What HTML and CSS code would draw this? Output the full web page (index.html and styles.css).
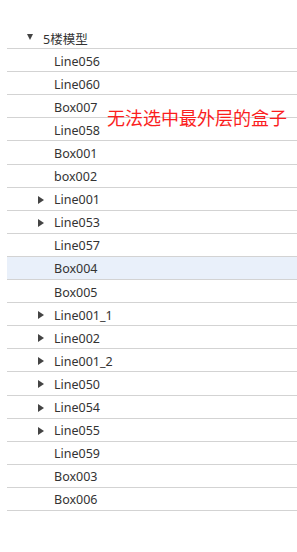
FILE: index.html
```html
<!DOCTYPE html>
<html>
<head>
  <meta charset="UTF-8">
  <title>模型树</title>
  <link rel="stylesheet" href="styles.css">
</head>
<body>
  <div class="tree">
    <div class="row lvl-0"><span class="arrow open"></span><span class="label">5楼模型</span></div>
    <div class="children">
      <div class="row lvl-1"><span class="arrow"></span><span class="label">Line056</span></div>
      <div class="row lvl-1"><span class="arrow"></span><span class="label">Line060</span></div>
      <div class="row lvl-1"><span class="arrow"></span><span class="label">Box007</span></div>
      <div class="row lvl-1"><span class="arrow"></span><span class="label">Line058</span></div>
      <div class="row lvl-1"><span class="arrow"></span><span class="label">Box001</span></div>
      <div class="row lvl-1"><span class="arrow"></span><span class="label">box002</span></div>
      <div class="row lvl-1"><span class="arrow closed"></span><span class="label">Line001</span></div>
      <div class="row lvl-1"><span class="arrow closed"></span><span class="label">Line053</span></div>
      <div class="row lvl-1"><span class="arrow"></span><span class="label">Line057</span></div>
      <div class="row lvl-1 current"><span class="arrow"></span><span class="label">Box004</span></div>
      <div class="row lvl-1"><span class="arrow"></span><span class="label">Box005</span></div>
      <div class="row lvl-1"><span class="arrow closed"></span><span class="label">Line001_1</span></div>
      <div class="row lvl-1"><span class="arrow closed"></span><span class="label">Line002</span></div>
      <div class="row lvl-1"><span class="arrow closed"></span><span class="label">Line001_2</span></div>
      <div class="row lvl-1"><span class="arrow closed"></span><span class="label">Line050</span></div>
      <div class="row lvl-1"><span class="arrow closed"></span><span class="label">Line054</span></div>
      <div class="row lvl-1"><span class="arrow closed"></span><span class="label">Line055</span></div>
      <div class="row lvl-1"><span class="arrow"></span><span class="label">Line059</span></div>
      <div class="row lvl-1"><span class="arrow"></span><span class="label">Box003</span></div>
      <div class="row lvl-1"><span class="arrow"></span><span class="label">Box006</span></div>
    </div>
  </div>

  <!-- annotation over the list -->
  <div class="note">无法选中最外层的盒子</div>
</body>
</html>
```

FILE: styles.css
```css
body { margin: 0; background: #fff; font-family: "Noto Sans", "Noto Sans CJK SC", sans-serif; color: #333; }
.tree { padding-top: 26px; margin-left: 7px; }
.row {
  display: flex;
  align-items: center;
  height: 23.1px;
  box-sizing: border-box;
  padding-top: 2px;
  border-bottom: 1px solid #d3d3d3;
  font-size: 12.5px;
}
.row.current { background: #e9f0fa; }
.lvl-0 { padding-left: 20px; }
.lvl-1 { padding-left: 31px; }
.arrow { width: 16px; height: 8px; position: relative; flex: none; }
.arrow.open::before {
  content: "";
  position: absolute;
  left: 0;
  top: 0;
  border-left: 3.5px solid transparent;
  border-right: 3.5px solid transparent;
  border-top: 6px solid #444;
}
.arrow.closed::before {
  content: "";
  position: absolute;
  left: 0;
  top: 0;
  border-top: 4px solid transparent;
  border-bottom: 4px solid transparent;
  border-left: 6px solid #444;
}
.label { white-space: nowrap; }
.note {
  position: absolute;
  left: 107px;
  top: 104px;
  font-family: "Noto Sans CJK SC", sans-serif;
  font-size: 18px;
  color: #fb1e1e;
}
```
